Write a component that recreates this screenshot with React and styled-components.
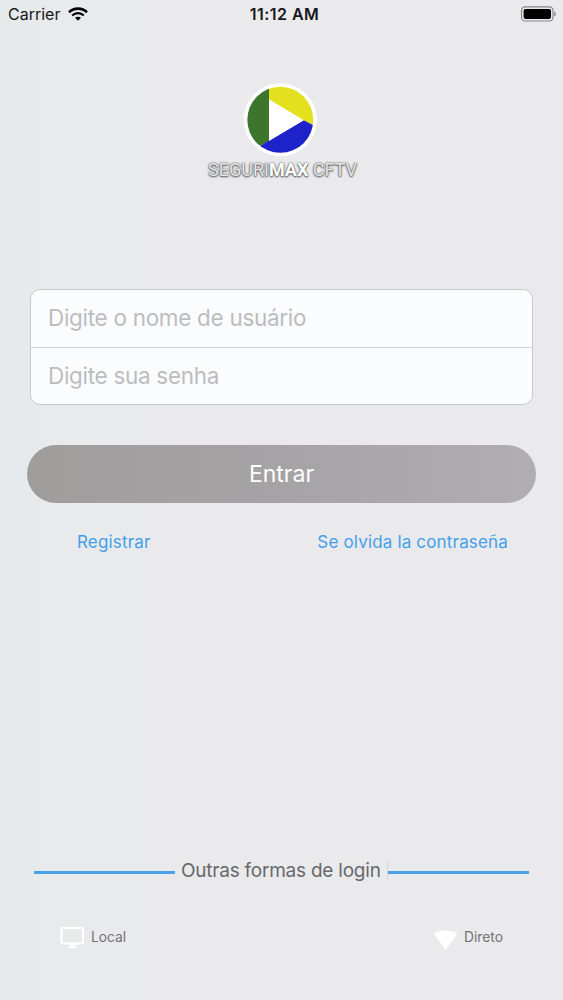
import React from "react";
import styled, { createGlobalStyle, css } from "styled-components";

const GlobalStyle = createGlobalStyle`
  * {
    box-sizing: border-box;
  }
  body {
    margin: 0;
    font-family: Inter, "Liberation Sans", sans-serif;
    background: #eaeaec;
  }
`;

const Screen = styled.main`
  display: flex;
  flex-direction: column;
  height: 1000px;
  overflow: hidden;
  background: linear-gradient(90deg, #e6eaeb 0, #e9eaec 90px, #eaeaed 180px);
`;

const StatusBar = styled.header`
  display: grid;
  grid-template-columns: 1fr auto 1fr;
  align-items: center;
  height: 28px;
  padding: 0 6px 0 8px;
  color: #17181a;
`;

const Carrier = styled.div`
  display: flex;
  align-items: center;
  gap: 8px;
  font-size: 16px;
`;

const Clock = styled.div`
  padding-left: 4px;
  font-size: 16px;
  font-weight: 600;
  letter-spacing: 0.45px;
`;

const BatteryIcon = styled.svg`
  justify-self: end;
`;

const Brand = styled.div`
  display: flex;
  flex-direction: column;
  align-items: center;
  height: 261px;
  padding-top: 53px;
`;

const LogoMark = styled.svg`
  overflow: visible;
`;

const BrandName = styled.div`
  margin-top: 4px;
  padding-left: 2px;
  font-family: Roboto, sans-serif;
  font-size: 18px;
  line-height: 22px;
  color: #e6e6e8;
  text-shadow: 0 1px 2px #555, 0 0 2px #666, 0 0 1px #777;
  b {
    font-weight: 700;
    color: #fff;
  }
`;

const Fields = styled.div`
  height: 116px;
  margin: 0 30px;
  border: 1px solid #c7c9cb;
  border-radius: 10px;
  background: #fbfcfe;
  overflow: hidden;
`;

const Field = styled.input`
  display: block;
  width: 100%;
  height: 57px;
  padding: 0 17px 3px;
  border: 0;
  outline: 0;
  background: transparent;
  font-family: inherit;
  font-size: 22.5px;
  letter-spacing: -0.3px;
  ${props =>
    props.$divided &&
    css`
      height: 58px;
      border-bottom: 1px solid #d0d2d4;
    `}
  &::placeholder {
    color: #bcbcbf;
    opacity: 1;
  }
`;

const LoginButton = styled.button`
  flex: none;
  height: 58px;
  margin: 40px 27px 0;
  border: 0;
  border-radius: 29px;
  background: linear-gradient(90deg, #9f9d9c, #a5a3a5 50%, #b0aeb1);
  color: #fff;
  font-family: inherit;
  font-size: 23px;
`;

const Links = styled.div`
  display: flex;
  justify-content: space-between;
  padding: 28px 55px 0 77px;
`;

const TextLink = styled.a`
  font-size: 17px;
  letter-spacing: 0.17px;
  line-height: 22px;
  color: #429fe8;
`;

const OtherLogin = styled.div`
  display: flex;
  align-items: center;
  height: 24px;
  margin: 306px 34px 0;
`;

const Rule = styled.div`
  flex: 1;
  height: 3px;
  margin-top: 2px;
  background: #48a3ec;
`;

const OtherTitle = styled.div`
  width: 214px;
  margin-left: -1px;
  padding-left: 7px;
  border-right: 1px solid #d8d9dd;
  font-size: 19px;
  letter-spacing: -0.23px;
  line-height: 22px;
  white-space: nowrap;
  color: #68686c;
`;

const Modes = styled.div`
  display: flex;
  justify-content: space-between;
  margin: 43px 60px 0;
`;

const Mode = styled.div`
  display: flex;
  align-items: center;
  gap: 6px;
  height: 22px;
  font-size: 13.8px;
  color: #737377;
`;

function WifiIcon() {
  return (
    <svg width="20" height="14" viewBox="0 0 20 14" fill="none">
      <path d="M1 5.2C6 .4 14 .4 19 5.2" stroke="#000" strokeWidth="2.6" />
      <path d="M4.2 8.5C7.5 5.4 12.5 5.4 15.8 8.5" stroke="#000" strokeWidth="2.3" />
      <path d="M10 13.8L7 10.8C8.7 9.3 11.3 9.3 13 10.8Z" fill="#000" />
    </svg>
  );
}

function Battery() {
  return (
    <BatteryIcon width="37" height="16" viewBox="0 0 37 16">
      <rect x="1.5" y=".8" width="31.5" height="14.2" rx="3.6" fill="none" stroke="#85868a" strokeWidth="1.2" />
      <rect x="3.6" y="2.9" width="27.4" height="10" rx="1.8" fill="#000" />
      <path d="M34.3 5.4C36.4 6 36.4 9.7 34.3 10.3Z" fill="#85868a" />
    </BatteryIcon>
  );
}

function Logo() {
  return (
    <LogoMark width="74" height="74" viewBox="0 0 74 74">
      <defs>
        <clipPath id="disc">
          <circle cx="35.3" cy="38.8" r="33" />
        </clipPath>
      </defs>
      <circle cx="35.3" cy="38.8" r="36.5" fill="#fff" />
      <g clipPath="url(#disc)">
        <path d="M24 0H74V47.2L58.7 39.3L24 18.5Z" fill="#e3e11e" />
        <path d="M0 0H24V60L16 64.5L0 74Z" fill="#3c752b" />
        <path d="M16 64.5L24 59.5L58.7 39.3L74 47.2V74H12Z" fill="#1d22cb" />
        <path d="M24 18.5L58.7 39.3L24 60Z" fill="#fff" />
      </g>
    </LogoMark>
  );
}

function MonitorIcon() {
  return (
    <svg width="25" height="24" viewBox="0 0 25 24">
      <path d="M1.5 3H23V18.5H1.5Z" fill="none" stroke="#fff" strokeWidth="2.2" strokeLinejoin="round" />
      <path d="M10 18.5H15V21L18 23.3H7L10 21Z" fill="#fff" />
    </svg>
  );
}

function SignalIcon() {
  return (
    <svg width="25" height="26" viewBox="0 0 25 26">
      <path d="M.5 9.5C7 5.5 18 5.5 24.5 9.5L12.5 26Z" fill="#fff" />
    </svg>
  );
}

export default function App() {
  return (
    <>
      <GlobalStyle />
      <Screen>
        <StatusBar>
          <Carrier>
            Carrier
            <WifiIcon />
          </Carrier>
          <Clock>11:12 AM</Clock>
          <Battery />
        </StatusBar>
        <Brand>
          <Logo />
          <BrandName>
            SEGURI<b>MAX</b> CFTV
          </BrandName>
        </Brand>
        <Fields>
          <Field $divided placeholder="Digite o nome de usuário" />
          <Field type="password" placeholder="Digite sua senha" />
        </Fields>
        <LoginButton>Entrar</LoginButton>
        <Links>
          <TextLink>Registrar</TextLink>
          <TextLink>Se olvida la contraseña</TextLink>
        </Links>
        <OtherLogin>
          <Rule />
          <OtherTitle>Outras formas de login</OtherTitle>
          <Rule />
        </OtherLogin>
        <Modes>
          <Mode>
            <MonitorIcon />
            Local
          </Mode>
          <Mode>
            <SignalIcon />
            Direto
          </Mode>
        </Modes>
      </Screen>
    </>
  );
}
